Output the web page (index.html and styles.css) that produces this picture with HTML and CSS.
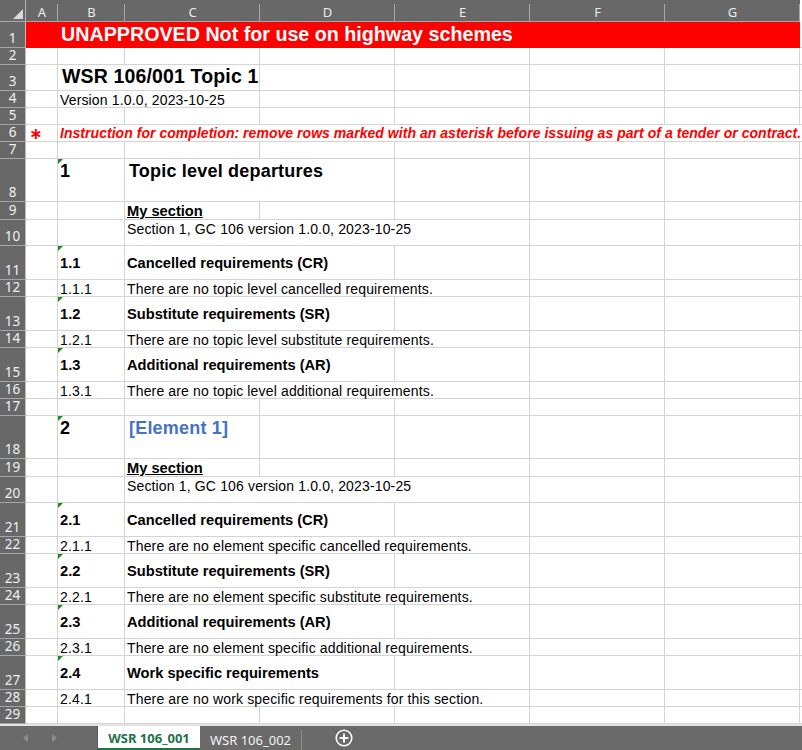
FILE: index.html
```html
<!DOCTYPE html>
<html lang="en">
<head>
<meta charset="utf-8">
<title>WSR 106/001 Topic 1</title>
<link rel="stylesheet" href="styles.css">
</head>
<body>
<div class="app">
  <div class="sheet">
    <!-- header -->
    <div class="corner"></div>
    <div class="colh">A</div><div class="colh">B</div><div class="colh">C</div><div class="colh">D</div><div class="colh">E</div><div class="colh">F</div><div class="colh">G</div><div class="colh-end"></div>

    <!-- 1 -->
    <div class="rh">1</div>
    <div class="c red"></div>
    <div class="c red banner s6">UNAPPROVED Not for use on highway schemes</div>
    <div class="c fill"></div>
    <!-- 2 -->
    <div class="rh">2</div>
    <div class="c"></div><div class="c"></div><div class="c"></div><div class="c"></div><div class="c"></div><div class="c"></div><div class="c"></div><div class="c fill"></div>
    <!-- 3 -->
    <div class="rh">3</div>
    <div class="c"></div>
    <div class="c title s2">WSR 106/001 Topic 1</div>
    <div class="c"></div><div class="c"></div><div class="c"></div><div class="c"></div><div class="c fill"></div>
    <!-- 4 -->
    <div class="rh">4</div>
    <div class="c"></div>
    <div class="c s2">Version 1.0.0, 2023-10-25</div>
    <div class="c"></div><div class="c"></div><div class="c"></div><div class="c"></div><div class="c fill"></div>
    <!-- 5 -->
    <div class="rh">5</div>
    <div class="c"></div><div class="c"></div><div class="c"></div><div class="c"></div><div class="c"></div><div class="c"></div><div class="c"></div><div class="c fill"></div>
    <!-- 6 -->
    <div class="rh">6</div>
    <div class="c star">∗</div>
    <div class="c instr s7">Instruction for completion: remove rows marked with an asterisk before issuing as part of a tender or contract.</div>
    <!-- 7 -->
    <div class="rh">7</div>
    <div class="c"></div><div class="c"></div><div class="c"></div><div class="c"></div><div class="c"></div><div class="c"></div><div class="c"></div><div class="c fill"></div>
    <!-- 8 -->
    <div class="rh">8</div>
    <div class="c"></div>
    <div class="c top h2 tri">1</div>
    <div class="c top h2 ind s2">Topic level departures</div>
    <div class="c"></div><div class="c"></div><div class="c"></div><div class="c fill"></div>
    <!-- 9 -->
    <div class="rh">9</div>
    <div class="c"></div><div class="c"></div>
    <div class="c b u">My section</div>
    <div class="c"></div><div class="c"></div><div class="c"></div><div class="c"></div><div class="c fill"></div>
    <!-- 10 -->
    <div class="rh">10</div>
    <div class="c"></div><div class="c"></div>
    <div class="c top s3">Section 1, GC 106 version 1.0.0, 2023-10-25</div>
    <div class="c"></div><div class="c"></div><div class="c fill"></div>
    <!-- 11 -->
    <div class="rh">11</div>
    <div class="c"></div>
    <div class="c mid b tri">1.1</div>
    <div class="c mid b s2">Cancelled requirements (CR)</div>
    <div class="c"></div><div class="c"></div><div class="c"></div><div class="c fill"></div>
    <!-- 12 -->
    <div class="rh">12</div>
    <div class="c"></div>
    <div class="c">1.1.1</div>
    <div class="c s3">There are no topic level cancelled requirements.</div>
    <div class="c"></div><div class="c"></div><div class="c fill"></div>
    <!-- 13 -->
    <div class="rh">13</div>
    <div class="c"></div>
    <div class="c mid b tri">1.2</div>
    <div class="c mid b s2">Substitute requirements (SR)</div>
    <div class="c"></div><div class="c"></div><div class="c"></div><div class="c fill"></div>
    <!-- 14 -->
    <div class="rh">14</div>
    <div class="c"></div>
    <div class="c">1.2.1</div>
    <div class="c s3">There are no topic level substitute requirements.</div>
    <div class="c"></div><div class="c"></div><div class="c fill"></div>
    <!-- 15 -->
    <div class="rh">15</div>
    <div class="c"></div>
    <div class="c mid b tri">1.3</div>
    <div class="c mid b s2">Additional requirements (AR)</div>
    <div class="c"></div><div class="c"></div><div class="c"></div><div class="c fill"></div>
    <!-- 16 -->
    <div class="rh">16</div>
    <div class="c"></div>
    <div class="c">1.3.1</div>
    <div class="c s3">There are no topic level additional requirements.</div>
    <div class="c"></div><div class="c"></div><div class="c fill"></div>
    <!-- 17 -->
    <div class="rh">17</div>
    <div class="c"></div><div class="c"></div><div class="c"></div><div class="c"></div><div class="c"></div><div class="c"></div><div class="c"></div><div class="c fill"></div>
    <!-- 18 -->
    <div class="rh">18</div>
    <div class="c"></div>
    <div class="c top h2 tri">2</div>
    <div class="c top h2 ind blue">[Element 1]</div>
    <div class="c"></div><div class="c"></div><div class="c"></div><div class="c"></div><div class="c fill"></div>
    <!-- 19 -->
    <div class="rh">19</div>
    <div class="c"></div><div class="c"></div>
    <div class="c b u">My section</div>
    <div class="c"></div><div class="c"></div><div class="c"></div><div class="c"></div><div class="c fill"></div>
    <!-- 20 -->
    <div class="rh">20</div>
    <div class="c"></div><div class="c"></div>
    <div class="c top s3">Section 1, GC 106 version 1.0.0, 2023-10-25</div>
    <div class="c"></div><div class="c"></div><div class="c fill"></div>
    <!-- 21 -->
    <div class="rh">21</div>
    <div class="c"></div>
    <div class="c mid b tri">2.1</div>
    <div class="c mid b s2">Cancelled requirements (CR)</div>
    <div class="c"></div><div class="c"></div><div class="c"></div><div class="c fill"></div>
    <!-- 22 -->
    <div class="rh">22</div>
    <div class="c"></div>
    <div class="c">2.1.1</div>
    <div class="c s3">There are no element specific cancelled requirements.</div>
    <div class="c"></div><div class="c"></div><div class="c fill"></div>
    <!-- 23 -->
    <div class="rh">23</div>
    <div class="c"></div>
    <div class="c mid b tri">2.2</div>
    <div class="c mid b s2">Substitute requirements (SR)</div>
    <div class="c"></div><div class="c"></div><div class="c"></div><div class="c fill"></div>
    <!-- 24 -->
    <div class="rh">24</div>
    <div class="c"></div>
    <div class="c">2.2.1</div>
    <div class="c s3">There are no element specific substitute requirements.</div>
    <div class="c"></div><div class="c"></div><div class="c fill"></div>
    <!-- 25 -->
    <div class="rh">25</div>
    <div class="c"></div>
    <div class="c mid b tri">2.3</div>
    <div class="c mid b s2">Additional requirements (AR)</div>
    <div class="c"></div><div class="c"></div><div class="c"></div><div class="c fill"></div>
    <!-- 26 -->
    <div class="rh">26</div>
    <div class="c"></div>
    <div class="c">2.3.1</div>
    <div class="c s3">There are no element specific additional requirements.</div>
    <div class="c"></div><div class="c"></div><div class="c fill"></div>
    <!-- 27 -->
    <div class="rh">27</div>
    <div class="c"></div>
    <div class="c mid b tri">2.4</div>
    <div class="c mid b s2">Work specific requirements</div>
    <div class="c"></div><div class="c"></div><div class="c"></div><div class="c fill"></div>
    <!-- 28 -->
    <div class="rh">28</div>
    <div class="c"></div>
    <div class="c">2.4.1</div>
    <div class="c s3">There are no work specific requirements for this section.</div>
    <div class="c"></div><div class="c"></div><div class="c fill"></div>
    <!-- 29 -->
    <div class="rh">29</div>
    <div class="c"></div><div class="c"></div><div class="c"></div><div class="c"></div><div class="c"></div><div class="c"></div><div class="c"></div><div class="c fill"></div>
  </div>

  <div class="strip"></div>

  <div class="tabbar">
    <div class="nav">
      <svg class="arrow" width="6" height="8" viewBox="0 0 6 8"><path d="M5 0 L0 4 L5 8 Z" fill="#8d8d8d"/></svg>
      <svg class="arrow" width="6" height="8" viewBox="0 0 6 8"><path d="M1 0 L6 4 L1 8 Z" fill="#8d8d8d"/></svg>
    </div>
    <div class="tab active">WSR 106_001</div>
    <div class="tab">WSR 106_002</div>
    <div class="add">
      <svg width="18" height="18" viewBox="0 0 18 18"><circle cx="9" cy="9" r="7.8" fill="none" stroke="#ffffff" stroke-width="1.6"/><path d="M9 4.6 V13.4 M4.6 9 H13.4" stroke="#ffffff" stroke-width="2"/></svg>
    </div>
  </div>
</div>
</body>
</html>
```

FILE: styles.css
```css
* { box-sizing: border-box; margin: 0; padding: 0; }

html, body {
  width: 802px;
  height: 750px;
  overflow: hidden;
  background: #ffffff;
}

body {
  font-family: "Liberation Sans", Arial, sans-serif;
  color: #000000;
}

.app {
  display: flex;
  flex-direction: column;
  height: 750px;
}

.sheet {
  display: grid;
  grid-template-columns: 26px 32px 67px 135px 135px 135px 135px 135px 2px;
  grid-template-rows: 22px 26px 17px 26px 17px 17px 17px 17px 43px 18px 26px 34px 17px 34px 17px 34px 17px 17px 43px 18px 26px 34px 17px 34px 17px 34px 17px 34px 17px 17px;
  height: 724px;
}

/* header row */
.corner {
  background: #686868;
  border-right: 1px solid #b4b4b4;
  border-bottom: 1px solid #a8a8a8;
  position: relative;
}
.corner::after {
  content: "";
  position: absolute;
  right: 2px;
  bottom: 2px;
  border-left: 10px solid transparent;
  border-bottom: 10px solid #dadada;
}
.colh {
  background: #686868;
  border-bottom: 1px solid #a8a8a8;
  color: #ececec;
  font-family: "Noto Sans", "Open Sans", sans-serif;
  font-size: 13px;
  display: flex;
  align-items: center;
  justify-content: center;
  padding-top: 3px;
  position: relative;
}
.colh::after {
  content: "";
  position: absolute;
  right: 0;
  top: 4px;
  bottom: 0;
  width: 1px;
  background: #a8a8a8;
}
.colh-end {
  background: #ffffff;
}

/* row header */
.rh {
  background: #686868;
  color: #f0f0f0;
  border-right: 1px solid #bcbcbc;
  border-bottom: 1px solid #a6a6a6;
  font-family: "Noto Sans", "Open Sans", sans-serif;
  font-size: 13.5px;
  line-height: 16px;
  display: flex;
  align-items: flex-end;
  justify-content: center;
  padding-bottom: 1px;
}

/* cells */
.c {
  border-right: 1px solid #d4d4d4;
  border-bottom: 1px solid #d4d4d4;
  display: flex;
  align-items: flex-end;
  padding-left: 2px;
  white-space: nowrap;
  position: relative;
  font-size: 14px;
  line-height: 13px;
  letter-spacing: 0.15px;
}
.c.fill { border-right: none; }

.s2 { grid-column: span 2; }
.s3 { grid-column: span 3; }
.s6 { grid-column: span 6; }
.s7 { grid-column: span 7; }

.top { align-items: flex-start; padding-top: 3px; }
.mid { align-items: center; }

.red {
  background: #ff0000;
  border-color: #ff0000;
}
.banner {
  color: #ffffff;
  font-weight: bold;
  font-size: 19.7px;
  line-height: normal;
  letter-spacing: 0;
  padding-left: 3px;
  padding-bottom: 1px;
}

.title {
  font-weight: bold;
  font-size: 19.5px;
  line-height: normal;
  letter-spacing: 0.15px;
  padding-left: 4px;
  padding-bottom: 2px;
}

.star {
  color: #ff0000;
  font-family: "DejaVu Sans", sans-serif;
  font-weight: bold;
  font-size: 16px;
  line-height: normal;
  letter-spacing: 0;
  padding-left: 3px;
  align-items: center;
}

.instr {
  color: #ff0000;
  font-weight: bold;
  font-style: italic;
  font-size: 14px;
  line-height: normal;
  letter-spacing: 0.04px;
  border-right: none;
}

.h2 {
  font-weight: bold;
  font-size: 18px;
  line-height: normal;
  letter-spacing: 0.2px;
}
.top.h2 { padding-top: 2px; }
.ind { padding-left: 4px; }
.blue { color: #4472c4; }

.b {
  font-weight: bold;
  font-size: 14.67px;
  line-height: normal;
  letter-spacing: 0;
}
.u { text-decoration: underline; }

.tri::before {
  content: "";
  position: absolute;
  left: 0;
  top: 0;
  border-top: 5px solid #1c8a1c;
  border-right: 5px solid transparent;
}

/* bottom */
.strip {
  height: 2px;
  background: #e3e3e3;
}

.tabbar {
  height: 24px;
  background: #6a6a6a;
  display: flex;
  font-family: "Noto Sans", "Open Sans", sans-serif;
  font-size: 13px;
}
.nav {
  width: 98px;
  border-right: 1px solid #5a5a5a;
  display: flex;
  align-items: center;
  padding-left: 23px;
  gap: 22px;
}
.tab {
  width: 102px;
  display: flex;
  align-items: center;
  justify-content: center;
  color: #f4f4f4;
}
.tab.active {
  background: #ffffff;
  color: #217346;
  font-weight: bold;
  border-bottom: 2px solid #217346;
  padding-top: 2px;
}
.tab + .tab:not(.active) {
  border-right: 1px solid #8e8e8e;
  margin: 4px 0 0;
}
.add {
  width: 84px;
  display: flex;
  align-items: center;
  justify-content: center;
}
```
